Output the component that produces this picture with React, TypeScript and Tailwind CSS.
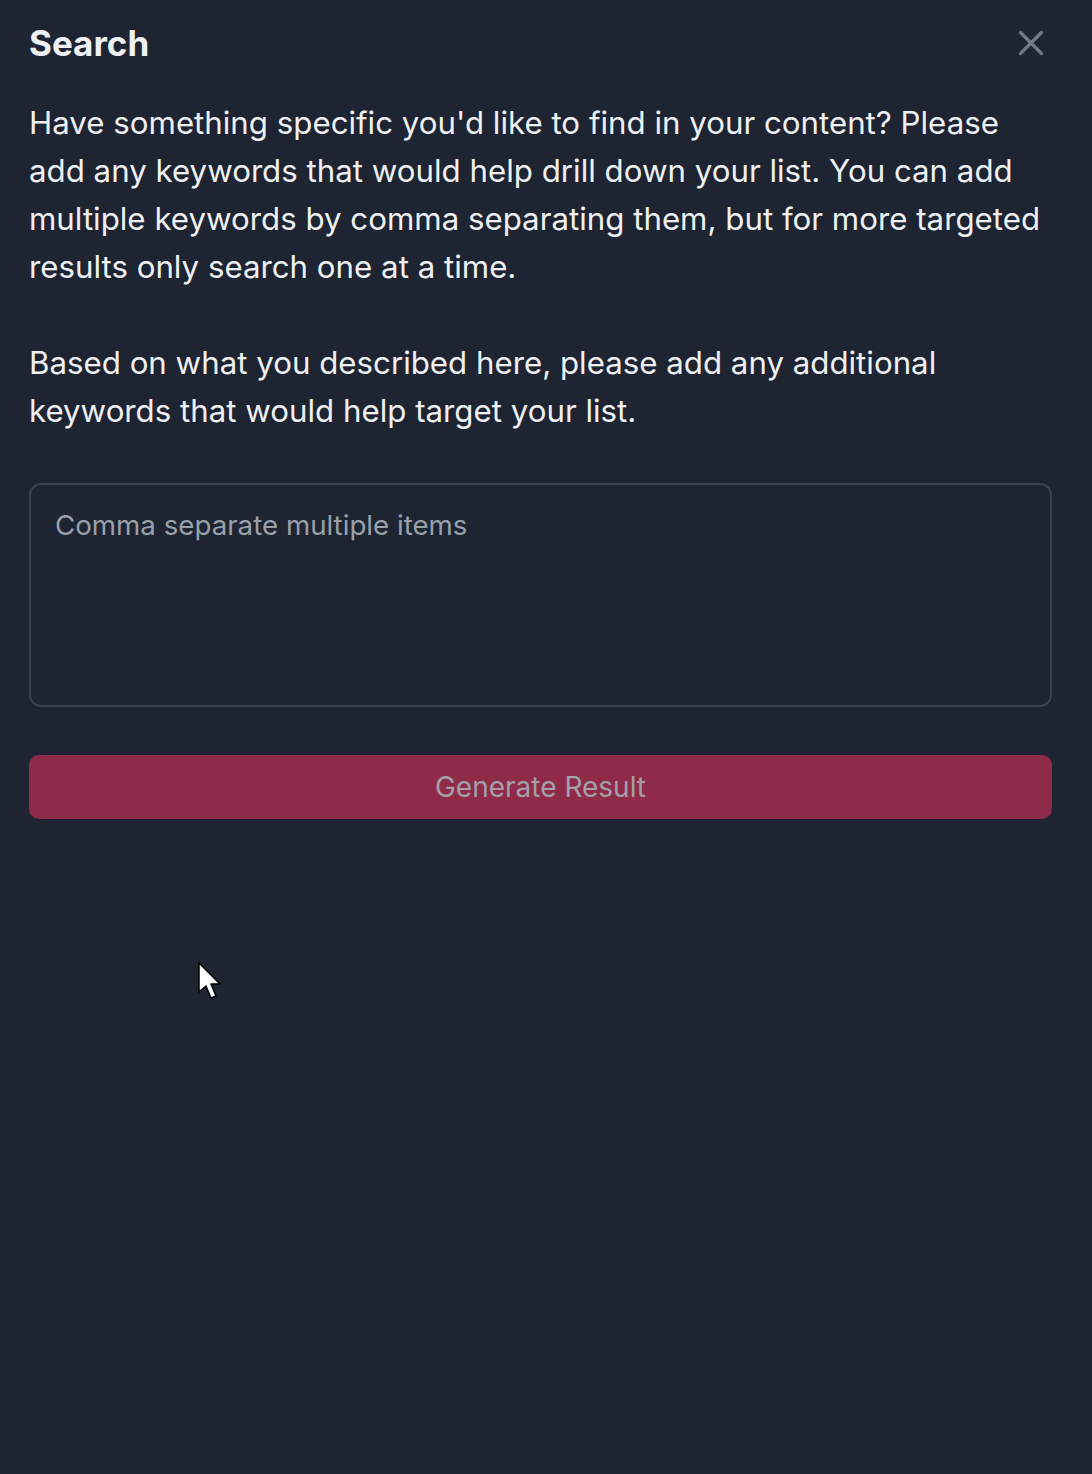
import React from "react";

export default function App() {
  return (
    <div className="relative min-h-[1474px] w-full bg-[#1e2432] text-[#eef0f3]" style={{ fontFamily: "Inter, 'Noto Sans', sans-serif" }}>
      <div className="pl-[29px] pr-[40px] pt-[20px]">
        <div className="flex items-center justify-between">
          <h1 className="text-[35px] font-bold leading-[46px] text-[#eef0f3]">Search</h1>
          <button className="mr-[4px] flex h-[34px] w-[34px] items-center justify-center text-[#737a87]">
            <svg width="28" height="28" viewBox="0 0 24 24" fill="none" stroke="currentColor" strokeWidth="2.8" strokeLinecap="round">
              <path d="M3 3 L21 21 M21 3 L3 21" />
            </svg>
          </button>
        </div>
        <div className="mt-[33px] text-[31.25px] leading-[48px] text-[#eef0f3]">
          <p>
            Have something specific you'd like to find in your content? Please add any keywords that would help drill down your list. You can add multiple keywords by comma separating them, but for more targeted results only search one at a time.
          </p>
          <p className="mt-[48px]">
            Based on what you described here, please add any additional keywords that would help target your list.
          </p>
        </div>
        <textarea
          placeholder="Comma separate multiple items"
          className="mt-[48px] block h-[224px] w-full resize-none rounded-[12px] border-2 border-[#3a4150] bg-transparent px-[24px] pb-[20px] pt-[20px] text-[27.7px] leading-[40px] text-[#eef0f3] placeholder-[#9aa0aa] outline-none"
        />
        <button className="mt-[48px] flex h-[64px] w-full items-center justify-center rounded-[10px] bg-[#8f2b48] text-[28px] text-[#a3a0a8]">
          Generate Result
        </button>
      </div>
      <svg className="absolute left-[197px] top-[961px]" width="26" height="40" viewBox="0 0 26 40">
        <path d="M2 2 L2 31 L9 25 L14 37 L19 35 L14 23 L23 23 Z" fill="#ffffff" stroke="#000000" strokeWidth="1.5" strokeLinejoin="round" />
      </svg>
    </div>
  );
}
